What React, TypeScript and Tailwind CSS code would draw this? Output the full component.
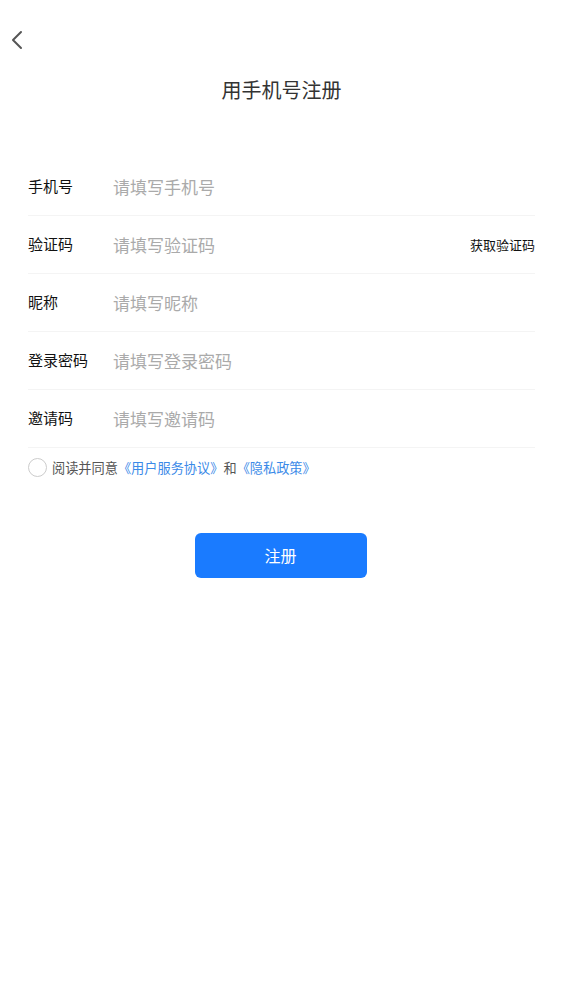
import React from "react";

const rows = [
  { label: "手机号", ph: "请填写手机号" },
  { label: "验证码", ph: "请填写验证码", extra: "获取验证码" },
  { label: "昵称", ph: "请填写昵称" },
  { label: "登录密码", ph: "请填写登录密码" },
  { label: "邀请码", ph: "请填写邀请码" },
];

export default function App() {
  return (
    <div
      className="w-[563px] h-[1002px] bg-white text-[#333]"
      style={{ fontFamily: '"Noto Sans CJK SC", "Noto Sans", sans-serif' }}
    >
      <div className="pt-[30px] pl-[10px] h-[50px]">
        <svg width="14" height="20" viewBox="0 0 14 20" fill="none">
          <path d="M11 2 L3 10 L11 18" stroke="#555" strokeWidth="2" strokeLinecap="round" strokeLinejoin="round" />
        </svg>
      </div>
      <div className="mt-[28px] text-center text-[20px] leading-[24px] text-[#333]">用手机号注册</div>
      <div className="mt-[56px] mx-[28px]">
        {rows.map((r) => (
          <div key={r.label} className="h-[58px] flex items-center border-b border-[#f4f4f4]">
            <div className="w-[85px] text-[15px] text-[#111]">{r.label}</div>
            <div className="flex-1 text-[17px] text-[#aaa]">{r.ph}</div>
            {r.extra && <div className="text-[13px] text-[#111]">{r.extra}</div>}
          </div>
        ))}
      </div>
      <div className="mx-[28px] mt-[10px] flex items-center">
        <div className="w-[19px] h-[19px] rounded-full border border-[#ccc]" />
        <div className="ml-[5px] text-[13.2px] text-[#555]">
          阅读并同意<span className="text-[#3b8ae8]">《用户服务协议》</span>和<span className="text-[#3b8ae8]">《隐私政策》</span>
        </div>
      </div>
      <div className="mt-[55px] flex justify-center">
        <div className="w-[172px] h-[45px] -translate-x-[1px] rounded-[6px] bg-[#1a7bff] text-white text-[16px] flex items-center justify-center">
          注册
        </div>
      </div>
    </div>
  );
}
